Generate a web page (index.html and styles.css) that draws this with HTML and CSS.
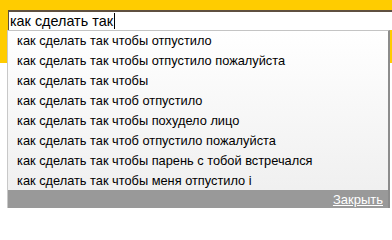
FILE: index.html
```html
<!DOCTYPE html>
<html lang="ru">
<head>
<meta charset="utf-8">
<title>Поиск</title>
<link rel="stylesheet" href="styles.css">
</head>
<body>
<div class="page">
  <div class="header">
    <div class="search">
      <span class="query">как сделать так</span><span class="caret"></span>
    </div>
  </div>
  <div class="suggest">
    <ul class="list">
      <li>как сделать так чтобы отпустило</li>
      <li>как сделать так чтобы отпустило пожалуйста</li>
      <li>как сделать так чтобы</li>
      <li>как сделать так чтоб отпустило</li>
      <li>как сделать так чтобы похудело лицо</li>
      <li>как сделать так чтоб отпустило пожалуйста</li>
      <li>как сделать так чтобы парень с тобой встречался</li>
      <li>как сделать так чтобы меня отпустило і</li>
    </ul>
    <div class="footer"><a class="close" href="#">Закрыть</a></div>
  </div>
</div>
</body>
</html>
```
FILE: styles.css
```css
html, body {
  margin: 0;
  padding: 0;
  background: #ffffff;
}
.page {
  position: relative;
  width: 392px;
  height: 208px;
  overflow: hidden;
  font-family: "Liberation Sans", Arial, sans-serif;
}
.header {
  height: 63px;
  background: #ffcc00;
  padding: 10px 0 0 8px;
  box-sizing: border-box;
}
.search {
  height: 20px;
  background: #ffffff;
  border-top: 2px solid #5f5040;
  border-left: 1px solid #5f5040;
  display: flex;
  align-items: center;
  padding-left: 1px;
  box-sizing: border-box;
}
.query {
  font-size: 14.4px;
  color: #000;
  line-height: 18px;
}
.caret {
  width: 1px;
  height: 16px;
  background: #000;
  margin-left: 1px;
}
.suggest {
  position: absolute;
  left: 7px;
  top: 30px;
  width: 383px;
  bottom: 0;
  border-top: 1px solid #c4c4c4;
  border-left: 1px solid #c8c8c8;
  border-right: 2px solid #8c8c8c;
  box-sizing: border-box;
  background: linear-gradient(#ffffff, #eeeeee);
  display: flex;
  flex-direction: column;
}
.list {
  list-style: none;
  margin: 0;
  padding: 0;
  flex: 1;
  min-height: 0;
  overflow: hidden;
}
.list li {
  height: 20px;
  line-height: 20px;
  padding-left: 9px;
  font-size: 12.8px;
  color: #000;
  white-space: nowrap;
}
.footer {
  flex: none;
  height: 18px;
  background: #999999;
  display: flex;
  justify-content: flex-end;
  align-items: center;
  padding-right: 5px;
}
.close {
  color: #ffffff;
  font-size: 13px;
  text-decoration: underline;
}
```
